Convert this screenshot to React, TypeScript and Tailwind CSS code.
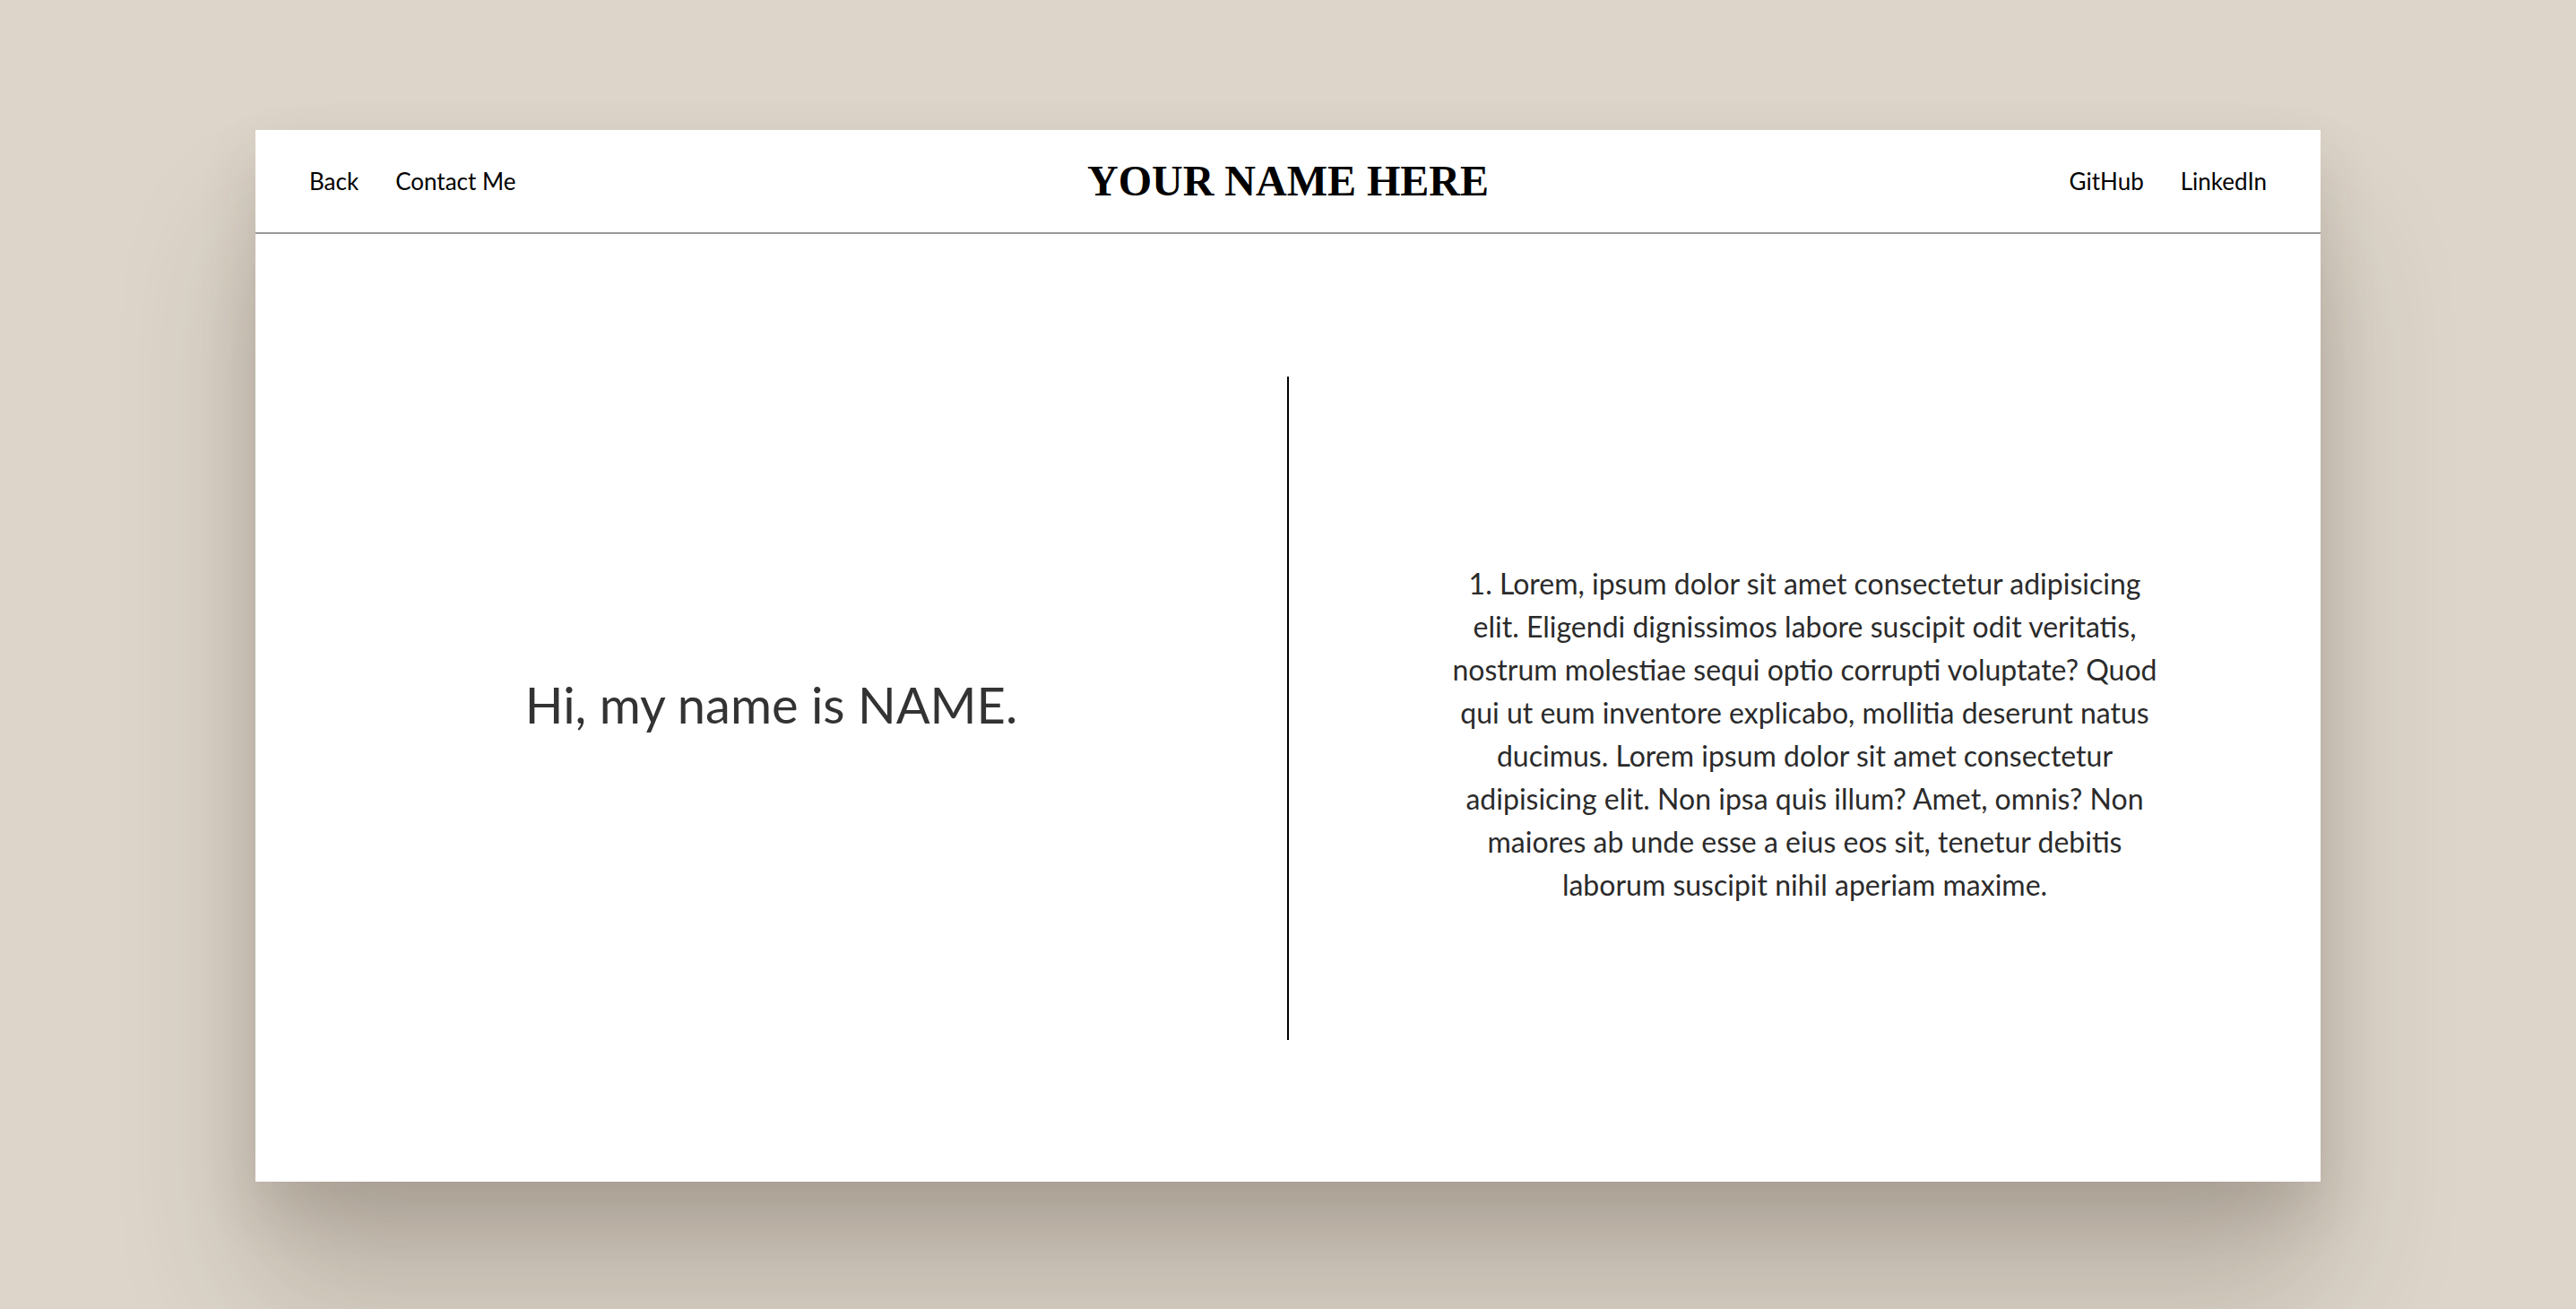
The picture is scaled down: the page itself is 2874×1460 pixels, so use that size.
const nunito = { fontFamily: 'Lato, "Noto Sans", sans-serif' };

function NavLink({ children }: { children: React.ReactNode }) {
  return (
    <a href="#" className="text-[26px] text-black leading-none">
      {children}
    </a>
  );
}

export default function App() {
  return (
    <div className="h-screen w-full overflow-hidden bg-[#ddd5ca] pt-[145px]" style={nunito}>
      <div className="mx-auto flex h-[1173px] w-[2304px] flex-col bg-white shadow-[0_30px_60px_rgba(60,45,30,0.14),0_120px_140px_rgba(60,45,30,0.22)]">
        <header className="grid h-[116px] shrink-0 grid-cols-[1fr_auto_1fr] items-center border-b-2 border-[#999] px-[60px]">
          <nav className="flex items-center gap-[41px]">
            <NavLink>Back</NavLink>
            <NavLink>Contact Me</NavLink>
          </nav>
          <h1 className="font-['Liberation_Serif',serif] text-[48px] font-bold leading-none text-black">
            YOUR NAME HERE
          </h1>
          <nav className="flex items-center justify-end gap-[41px]">
            <NavLink>GitHub</NavLink>
            <NavLink>LinkedIn</NavLink>
          </nav>
        </header>

        <main className="flex flex-1 items-center">
          <section className="flex flex-1 justify-center pb-[8px]">
            <h2 className="text-[56px] leading-none text-[#333]">Hi, my name is NAME.</h2>
          </section>
          <div className="h-[740px] w-[2px] shrink-0 bg-black" />
          <section className="flex flex-1 justify-center pt-[58px]">
            <p className="max-w-[800px] text-center text-[32px] leading-[48px] text-[#2b2b2b]">
              1. Lorem, ipsum dolor sit amet consectetur adipisicing elit. Eligendi dignissimos labore
              suscipit odit veritatis, nostrum molestiae sequi optio corrupti voluptate? Quod qui ut eum
              inventore explicabo, mollitia deserunt natus ducimus. Lorem ipsum dolor sit amet consectetur
              adipisicing elit. Non ipsa quis illum? Amet, omnis? Non maiores ab unde esse a eius eos sit,
              tenetur debitis laborum suscipit nihil aperiam maxime.
            </p>
          </section>
        </main>
      </div>
    </div>
  );
}
